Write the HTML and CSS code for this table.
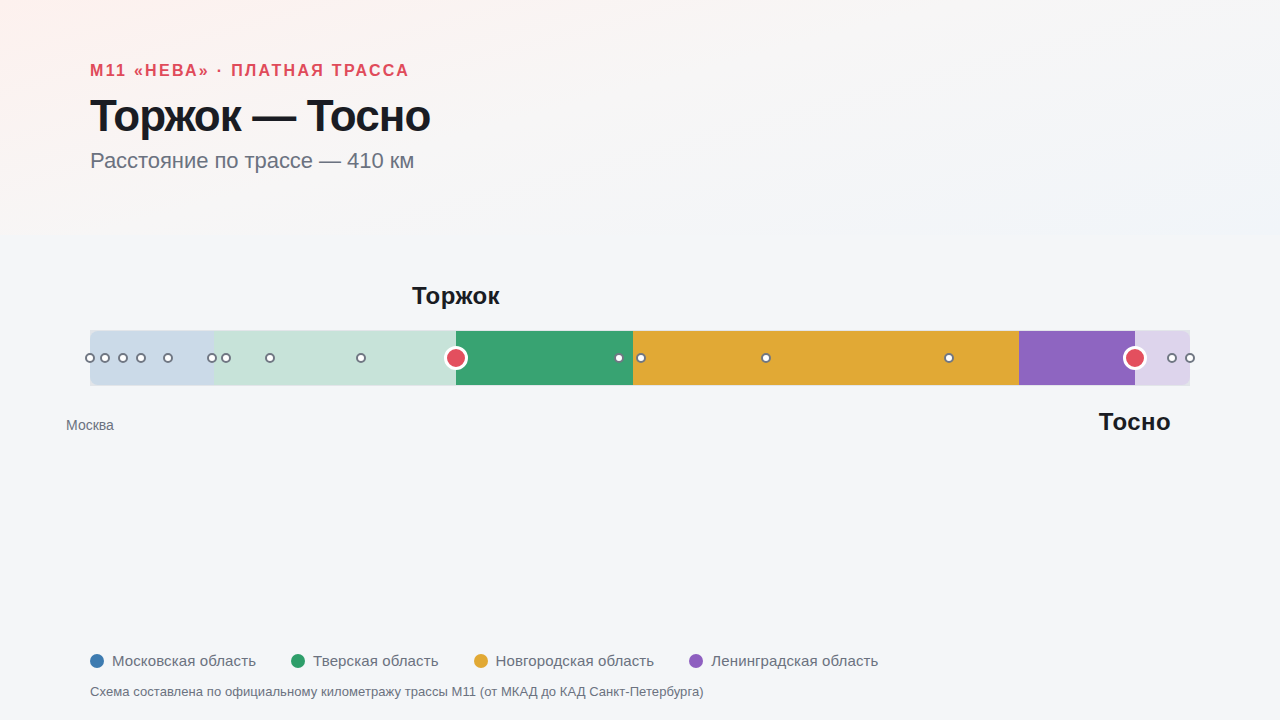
FILE: index.html
```html
<!DOCTYPE html>
<html lang="ru">
<head>
<meta charset="utf-8">
<title>Торжок — Тосно</title>
<link rel="stylesheet" href="styles.css">
</head>
<body>
<main class="page">
  <header class="head">
    <div class="eyebrow">М11 «НЕВА» · ПЛАТНАЯ ТРАССА</div>
    <h1 class="title">Торжок — Тосно</h1>
    <p class="subtitle">Расстояние по трассе — 410 км</p>
  </header>

  <section class="chart">
    <div class="bar">
      <div class="seg seg-msk-light first" style="width:11.273%"></div>
      <div class="seg seg-tver-light" style="width:22%"></div>
      <div class="seg seg-tver" style="width:16.09%"></div>
      <div class="seg seg-nov" style="width:35.12%"></div>
      <div class="seg seg-len" style="width:10.545%"></div>
      <div class="seg seg-len-light last" style="width:4.972%"></div>

      <span class="dot" style="left:0%"></span>
      <span class="dot" style="left:1.364%"></span>
      <span class="dot" style="left:3%"></span>
      <span class="dot" style="left:4.664%"></span>
      <span class="dot" style="left:7.118%"></span>
      <span class="dot" style="left:11.118%"></span>
      <span class="dot" style="left:12.336%"></span>
      <span class="dot" style="left:16.39%"></span>
      <span class="dot" style="left:24.61%"></span>
      <span class="dot" style="left:48.06%"></span>
      <span class="dot" style="left:50.118%"></span>
      <span class="dot" style="left:61.427%"></span>
      <span class="dot" style="left:78.09%"></span>
      <span class="dot" style="left:98.336%"></span>
      <span class="dot" style="left:100%"></span>

      <span class="stop" style="left:33.273%"></span>
      <span class="stop" style="left:95%"></span>

      <span class="label label-top" style="left:33.273%">Торжок</span>
      <span class="label label-bottom" style="left:95%">Тосно</span>
      <span class="origin" style="left:0%">Москва</span>
    </div>
  </section>

  <footer class="foot">
    <ul class="legend">
      <li class="legend-item"><span class="swatch sw-msk"></span>Московская область</li>
      <li class="legend-item"><span class="swatch sw-tver"></span>Тверская область</li>
      <li class="legend-item"><span class="swatch sw-nov"></span>Новгородская область</li>
      <li class="legend-item"><span class="swatch sw-len"></span>Ленинградская область</li>
    </ul>
    <p class="note">Схема составлена по официальному километражу трассы М11 (от МКАД до КАД Санкт-Петербурга)</p>
  </footer>
</main>
</body>
</html>
```

FILE: styles.css
```css
* { box-sizing: border-box; }

html, body {
  margin: 0;
  padding: 0;
}

body {
  width: 1280px;
  height: 720px;
  overflow: hidden;
  font-family: "Liberation Sans", Arial, sans-serif;
  color: #1a1c23;
  background:
    linear-gradient(165deg, #fdf1ee 0%, #f7f6f6 45%, #f1f5f9 100%) top left / 100% 235px no-repeat,
    #f4f6f8;
}

.page {
  height: 720px;
  padding: 61px 90px 20px;
  display: flex;
  flex-direction: column;
}

.eyebrow {
  font-size: 16px;
  line-height: 20px;
  font-weight: 700;
  letter-spacing: 2.3px;
  color: #e04b5a;
}

.title {
  margin: 9px 0 0;
  font-size: 44px;
  line-height: 52px;
  font-weight: 700;
  letter-spacing: -0.9px;
  color: #1a1c23;
}

.subtitle {
  margin: 5px 0 0;
  font-size: 22px;
  line-height: 28px;
  letter-spacing: -0.05px;
  color: #6b7280;
}

.chart {
  margin-top: 155px;
}

.bar {
  position: relative;
  width: 1100px;
  height: 56px;
  padding: 1px 0;
  display: flex;
  background: #e2e5e9;
}

.seg { height: 54px; }
.first { border-radius: 8px 0 0 8px; }
.last { border-radius: 0 8px 8px 0; }

.seg-msk-light { background: #cbdae8; }
.seg-tver-light { background: #c7e3d9; }
.seg-tver { background: #38a372; }
.seg-nov { background: #e1a935; }
.seg-len { background: #8e65c1; }
.seg-len-light { background: #ddd4ec; }

.dot {
  position: absolute;
  top: 50%;
  width: 10px;
  height: 10px;
  margin: -5px 0 0 -5px;
  border-radius: 50%;
  background: #ffffff;
  border: 2px solid #707783;
}

.stop {
  position: absolute;
  top: 50%;
  width: 24px;
  height: 24px;
  margin: -12px 0 0 -12px;
  border-radius: 50%;
  background: #e34f5e;
  border: 3px solid #ffffff;
}

.label {
  position: absolute;
  transform: translateX(-50%);
  font-size: 24px;
  line-height: 28px;
  font-weight: 700;
  letter-spacing: 0.5px;
  white-space: nowrap;
  color: #1a1c23;
}

.label-top { bottom: calc(100% + 20px); }
.label-bottom { top: calc(100% + 22px); }

.origin {
  position: absolute;
  top: calc(100% + 30px);
  transform: translateX(-50%);
  font-size: 14px;
  line-height: 18px;
  color: #6b7280;
  white-space: nowrap;
}

.foot {
  margin-top: auto;
}

.legend {
  margin: 0;
  padding: 0;
  list-style: none;
  display: flex;
  gap: 35px;
}

.legend-item {
  display: flex;
  align-items: center;
  gap: 8px;
  font-size: 15px;
  line-height: 20px;
  letter-spacing: 0.12px;
  color: #6b7280;
}

.swatch {
  width: 14px;
  height: 14px;
  border-radius: 50%;
}

.sw-msk { background: #3d7bb0; }
.sw-tver { background: #2e9e6a; }
.sw-nov { background: #e1a935; }
.sw-len { background: #8e5fc0; }

.note {
  margin: 13px 0 0;
  font-size: 13px;
  line-height: 16px;
  letter-spacing: 0.07px;
  color: #6b7280;
}
```
